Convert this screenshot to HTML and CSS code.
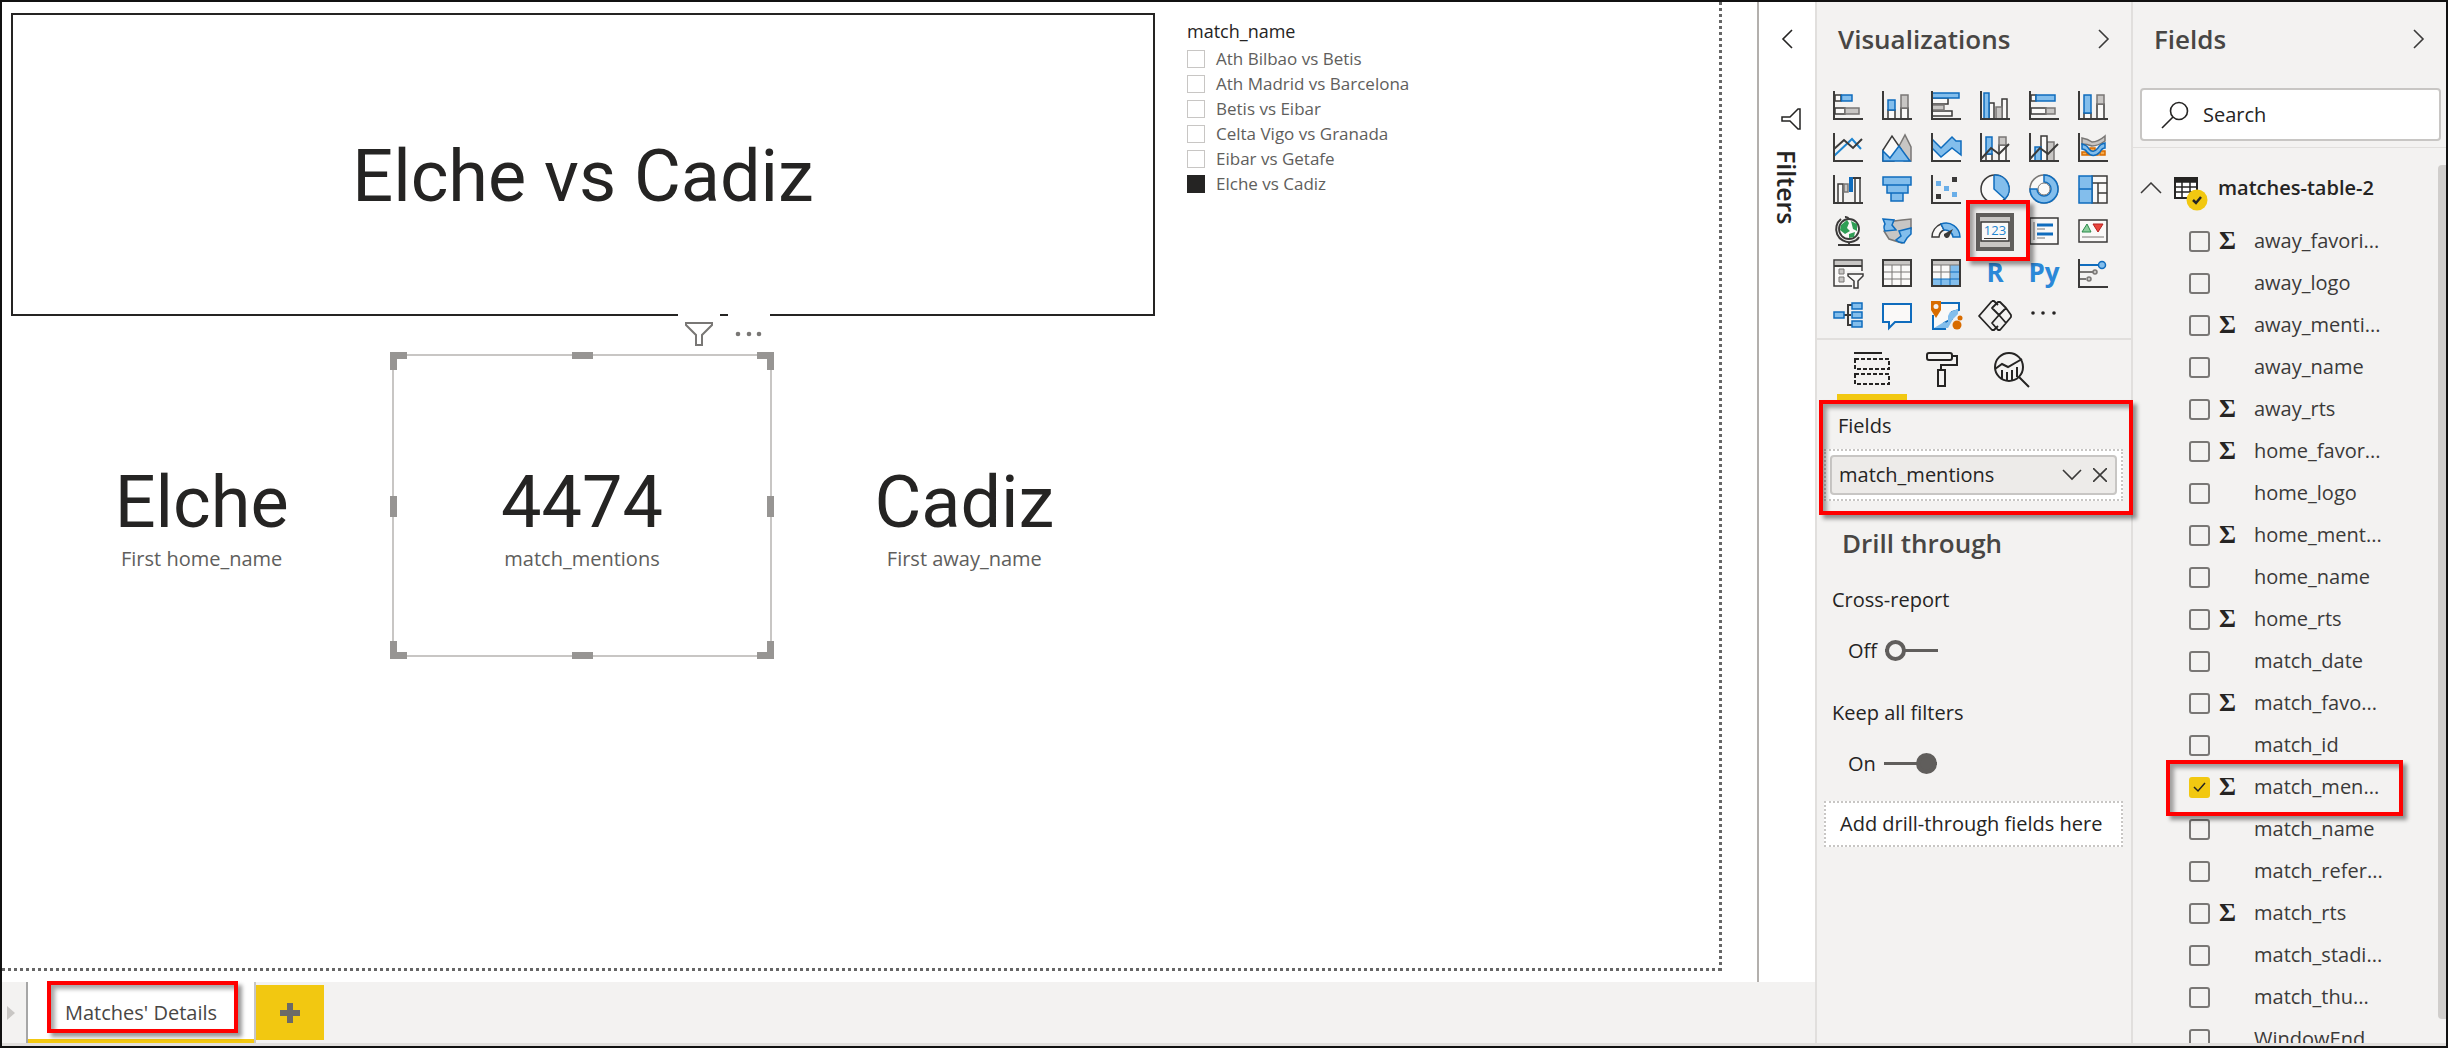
FILE: index.html
```html
<!DOCTYPE html>
<html lang="en">
<head>
<meta charset="utf-8">
<meta name="viewport" content="width=device-width, initial-scale=1">
<title>Matches' Details</title>
<link rel="stylesheet" href="styles.css">
</head>
<body>
<div class="app">
  <main class="workspace">
    <div class="stage">
      <div class="canvas">
        <div class="report">
          <div class="visuals">
            <section class="card title-card"><p class="value">Elche vs Cadiz</p></section>
            <div class="card-row">
              <section class="card"><p class="value">Elche</p><p class="caption">First home_name</p></section>
              <section class="card selected">
                <p class="value">4474</p><p class="caption">match_mentions</p>
                <div class="visual-header">
                  <button class="header-btn" aria-label="Filters on this visual"><svg width="28" height="24" viewBox="0 0 28 24" fill="none" stroke="#797775" stroke-width="2"><path d="M1 1H27V3L17 13V23H11V13L1 3Z"/></svg></button>
                  <button class="header-btn" aria-label="More options"><svg width="28" height="24" viewBox="0 0 28 24" fill="#797775"><circle cx="3" cy="12" r="2.3"/><circle cx="14" cy="12" r="2.3"/><circle cx="24" cy="12" r="2.3"/></svg></button>
                </div>
                <i class="handle corner tl"></i><i class="handle top"></i><i class="handle corner tr"></i>
                <i class="handle left"></i><i class="handle right"></i>
                <i class="handle corner bl"></i><i class="handle bottom"></i><i class="handle corner br"></i>
              </section>
              <section class="card"><p class="value">Cadiz</p><p class="caption">First away_name</p></section>
            </div>
          </div>
          <fieldset class="slicer">
            <legend>match_name</legend>
            <label><input type="checkbox">Ath Bilbao vs Betis</label>
            <label><input type="checkbox">Ath Madrid vs Barcelona</label>
            <label><input type="checkbox">Betis vs Eibar</label>
            <label><input type="checkbox">Celta Vigo vs Granada</label>
            <label><input type="checkbox">Eibar vs Getafe</label>
            <label><input type="checkbox" checked>Elche vs Cadiz</label>
          </fieldset>
        </div>
      </div>
      <aside class="filters">
        <button class="plain" aria-label="Expand filters"><svg width="12" height="20" viewBox="0 0 12 20" fill="none" stroke="#252423" stroke-width="1.6"><path d="M11 1L2 10L11 19"/></svg></button>
        <svg class="filter-icon" width="20" height="22" viewBox="0 0 20 22" fill="none" stroke="#252423" stroke-width="1.5"><path d="M19 1V21H17L9 13H1V9H9L17 1Z"/></svg>
        <h2>Filters</h2>
      </aside>
    </div>
    <nav class="tabs">
      <button class="scroll-tabs" aria-label="Next pages"><svg width="8" height="14" viewBox="0 0 8 14" fill="#c8c6c4"><path d="M0 0L8 7L0 14Z"/></svg></button>
      <div class="tab-wrap marked"><button class="tab">Matches' Details</button></div>
      <button class="add" aria-label="New page"><svg width="20" height="20" viewBox="0 0 20 20" fill="#6b6a67"><path d="M7 0H13V7H20V13H13V20H7V13H0V7H7Z"/></svg></button>
    </nav>
  </main>

  <aside class="pane viz">
    <header class="pane-head"><h2>Visualizations</h2><button class="plain" aria-label="Collapse"><svg width="12" height="20" viewBox="0 0 12 20" fill="none" stroke="#3b3a39" stroke-width="1.6"><path d="M1 1L10 10L1 19"/></svg></button></header>
    <div class="gallery">
      <button aria-label="Stacked bar chart"><svg viewBox="0 0 30 30"><path class="w" d="M2 4H8V10H2ZM2 17H12V23H2Z"/><path class="b" d="M8.500 4H19V10H8.500Z"/><path class="g" d="M12 17H26V23H12Z"/><path class="ax" d="M1 0V28H30"/></svg></button>
      <button aria-label="Stacked column chart"><svg viewBox="0 0 30 30"><path class="w" d="M6 19H13V28H6ZM19 17H26V28H19Z"/><path class="b" d="M6 9H13V19H6Z"/><path class="g" d="M19 4H26V17H19Z"/><path class="ax" d="M1 0V28H30"/></svg></button>
      <button aria-label="Clustered bar chart"><svg viewBox="0 0 30 30"><path class="w" d="M1 7H17V13H1ZM1 20H21V25H1Z"/><path class="g" d="M1 14H13V19H1Z"/><path class="b" d="M1 2H28V7H1Z"/><path class="ax" d="M1 0V28H30"/></svg></button>
      <button aria-label="Clustered column chart"><svg viewBox="0 0 30 30"><path class="w" d="M9 12H14V28H9ZM22 8H27V28H22Z"/><path class="g" d="M16 16H22V28H16Z"/><path class="b" d="M4 2H9V28H4Z"/><path class="ax" d="M1 0V28H30"/></svg></button>
      <button aria-label="100% stacked bar chart"><svg viewBox="0 0 30 30"><path class="w" d="M2 4H7V10H2ZM2 17H17V23H2Z"/><path class="b" d="M7 4H26V10H7Z"/><path class="g" d="M17 17H26V23H17Z"/><path class="ax" d="M1 0V28H30"/></svg></button>
      <button aria-label="100% stacked column chart"><svg viewBox="0 0 30 30"><path class="w" d="M6 22H13V28H6ZM19 13H26V28H19Z"/><path class="b" d="M6 4H13V22H6Z"/><path class="g" d="M19 4H26V13H19Z"/><path class="ax" d="M1 0V28H30"/></svg></button>

      <button aria-label="Line chart"><svg viewBox="0 0 30 30"><path class="bl" d="M1 23L19 6L28 16"/><path class="ln" d="M1 16L11 7L20 15L29 6"/><path class="ax" d="M1 0V28H30"/></svg></button>
      <button aria-label="Area chart"><svg viewBox="0 0 30 30"><path class="g" d="M15 17L23 2L29 14V28H22Z"/><path class="w" d="M1 28V17L10 3L19 16L12 28Z"/><path class="b" d="M1 18L8 25L17 13L28 28H1Z"/></svg></button>
      <button aria-label="Stacked area chart"><svg viewBox="0 0 30 30"><path fill="#faf9f8" d="M1 14L10 24L21 15L30 22V28H1Z"/><path class="b" d="M1 6L10 15L21 4L25 8H30V22L21 15L10 24L1 15Z"/><path class="ax" d="M1 0V28H30"/></svg></button>
      <button aria-label="Line and stacked column chart"><svg viewBox="0 0 30 30"><path class="w" d="M6 21H12V28H6ZM19 12H26V28H19Z"/><path class="b" d="M6 4H12V21H6Z"/><path class="g" d="M19 4H26V12H19Z"/><path class="ln" d="M1 26L11 15L19 21L29 11"/><path class="ax" d="M1 0V28H30"/></svg></button>
      <button aria-label="Line and clustered column chart"><svg viewBox="0 0 30 30"><path class="g" d="M18 9H25V28H18Z"/><path class="w" d="M12 3H18V28H12Z"/><path class="b" d="M6 14H12V28H6Z"/><path class="ln" d="M1 26L11 15L19 21L29 11"/><path class="ax" d="M1 0V28H30"/></svg></button>
      <button aria-label="Ribbon chart"><svg viewBox="0 0 30 30"><path fill="#f7a94b" stroke="#d86c00" stroke-width="1.500" d="M4 19H9V22H4ZM12 15H17V19H12ZM22 18H27V22H22ZM10 20H20V22H10Z"/><path class="g" d="M4 5Q10 6 14 9Q20 9 27 3V8Q20 13 14 13Q9 11 4 11Z"/><path class="b" d="M4 11Q9 12 11 16Q15 21 20 15Q22 11 27 10V15Q24 15 22 19Q15 26 9 19Q7 16 4 16Z"/><path class="ax" d="M1 0V28H30"/></svg></button>

      <button aria-label="Waterfall chart"><svg viewBox="0 0 30 30"><path class="w" d="M5 9H10V28H5ZM22 3H27V28H22Z"/><path class="g" d="M11 9H15V17H11Z"/><path fill="#0f6cbd" d="M16 2H20V17H16Z"/><path class="ln" d="M20 3H28"/><path class="ax" d="M1 0V28H30"/></svg></button>
      <button aria-label="Funnel chart"><svg viewBox="0 0 30 30"><path class="b" d="M1 2H29V10H1ZM5 10H26V18H5ZM9 18H21V26H9Z"/></svg></button>
      <button aria-label="Scatter chart"><svg viewBox="0 0 30 30"><path fill="#3b3a39" d="M21 2H26V7H21ZM5 19H10V24H5Z"/><path fill="#6aaee8" d="M5 6H10V11H5ZM13 11H18V16H13ZM21 17H26V22H21Z"/><path class="ax" d="M1 0V28H30"/></svg></button>
      <button aria-label="Pie chart"><svg viewBox="0 0 30 30"><circle class="w" cx="15" cy="14" r="14"/><path class="b" d="M15 0A14 14 0 0 1 25 24L14 14V1Z"/></svg></button>
      <button aria-label="Donut chart"><svg viewBox="0 0 30 30"><circle cx="15" cy="14" r="14" fill="#faf9f8" stroke="#797775" stroke-width="1.500"/><path class="b" d="M15 0A14 14 0 1 1 1 14H8A7 7 0 1 0 15 7Z"/><circle cx="15" cy="14" r="6" fill="#faf9f8" stroke="#797775"/></svg></button>
      <button aria-label="Treemap"><svg viewBox="0 0 30 30"><path class="w" d="M14 1H29V28H14ZM14 8H29M20 8V28M20 18H29"/><path class="b" d="M1 1H14V28H1ZM1 14H14"/></svg></button>

      <button aria-label="Map"><svg viewBox="0 0 30 30"><path class="ln" d="M8 2A13 13 0 0 0 18 25Q24 24 26 20M12 0A4 4 0 0 1 16 2M16 25V28M5 28H27"/><circle cx="16" cy="12" r="10" fill="#faf9f8" stroke="#3b3a39" stroke-width="1.800"/><path fill="#2f9e55" d="M8 8L14 3L16 6L14 11L17 14L12 17L7 13ZM18 4L24 7L24 14L20 12ZM16 17L22 15L21 20L16 21Z"/></svg></button>
      <button aria-label="Filled map"><svg viewBox="0 0 30 30"><path class="g" d="M12 4L20 3L29 2V12L20 26L7 22L2 14Z"/><path class="b" d="M1 2L12 3L10 8L14 13L3 14Q1 10 3 7Z"/><path class="b" d="M17 14L29 11V17L25 21L22 26L17 25L14 23L19 19Z"/></svg></button>
      <button aria-label="Gauge"><svg viewBox="0 0 30 30"><path class="w" d="M1 20A14 14 0 0 1 10 7L13 13A8 8 0 0 0 8 20Z"/><path class="b" d="M10 7A14 14 0 0 1 29 20H22A8 8 0 0 0 13 13Z"/><path fill="#3b3a39" d="M22 12L18 20A3 3 0 0 1 13 17Z"/></svg></button>
      <button class="chosen marked" aria-label="Card" aria-pressed="true"><svg viewBox="0 0 30 30"><path class="w" d="M1 5H29V24H1Z"/><text x="15" y="18" text-anchor="middle" font-size="13" fill="#1f85d0">123</text><path stroke="#3b3a39" d="M4 21.500H26"/></svg></button>
      <button aria-label="Multi-row card"><svg viewBox="0 0 30 30"><path class="w" d="M1 1H29V27H1Z"/><path d="M5 5V23" stroke="#797775" stroke-width="1"/><path stroke="#0f6cbd" stroke-width="3" d="M8 8H24M8 17H24"/><path stroke="#797775" d="M8 12H16M8 21H16"/></svg></button>
      <button aria-label="KPI"><svg viewBox="0 0 30 30"><path class="w" d="M1 3H29V25H1Z"/><path fill="#8ccf9c" stroke="#2b8a4b" d="M9 7L13 15H4Z"/><path fill="#e8453c" stroke="#b81f1f" d="M15 7H25L20 15Z"/><path stroke="#797775" d="M4 20H26"/></svg></button>

      <button aria-label="Slicer"><svg viewBox="0 0 30 30"><path class="w" d="M1 1H29V27H1Z"/><path fill="#c8c6c4" d="M2 2H28V7H2Z"/><path class="ln" d="M1 7H29"/><path fill="#c8c6c4" stroke="#797775" d="M6 10H11V15H6ZM6 18H11V23H6Z"/><path fill="#f3f2f1" d="M13 12H30V30H19V22Z"/><path class="w" d="M15 15H30V17L25 22V29H21V22L15 17Z"/></svg></button>
      <button aria-label="Table"><svg viewBox="0 0 30 30"><path class="w" d="M1 1H29V27H1Z"/><path fill="#c8c6c4" d="M2 2H28V6H2Z"/><path stroke="#797775" d="M2 6H28M2 13H28M2 20H28M10 6V27M19 6V27" fill="none"/><path class="ax" d="M1 1H29V27H1Z"/></svg></button>
      <button aria-label="Matrix"><svg viewBox="0 0 30 30"><path class="w" d="M1 1H29V27H1Z"/><path fill="#c8c6c4" d="M2 2H28V6H2Z"/><path fill="#83beec" d="M19 6H28V27H2V20H19Z"/><path stroke="#797775" d="M2 6H28M2 13H19M10 6V20M19 6V20" fill="none"/><path stroke="#0f6cbd" d="M2 20H28M19 13H28M10 20V27M19 20V27"/><path class="ax" d="M1 1H29V27H1Z"/></svg></button>
      <button class="script" aria-label="R script visual">R</button>
      <button class="script" aria-label="Python visual">Py</button>
      <button aria-label="Key influencers"><svg viewBox="0 0 30 30"><path stroke="#0f6cbd" stroke-width="2" d="M2 6H20"/><circle class="b" cx="24" cy="6" r="3.500"/><path stroke="#797775" stroke-width="2" d="M2 13H15M2 20H8"/><circle class="g" cx="17" cy="13" r="2"/><circle class="g" cx="11" cy="20" r="2"/><path class="ax" d="M1 0V28H30"/></svg></button>

      <button aria-label="Decomposition tree"><svg viewBox="0 0 30 30"><path class="ln" d="M11 14H18M24 4H15V24H24M15 14H18"/><path class="b" d="M1 11H11V17H1ZM19 2H29V8H19ZM19 11H29V17H19ZM19 20H29V26H19Z"/></svg></button>
      <button aria-label="Q&amp;A"><svg viewBox="0 0 30 30"><path d="M1 3H29V21H13L7 27V21H1Z" fill="#faf9f8" stroke="#0f6cbd" stroke-width="2"/></svg></button>
      <button aria-label="Azure map"><svg viewBox="0 0 30 30"><path d="M2 14V28H14L13 22L21 18L21 11L28 9V2H10" fill="#faf9f8" stroke="#0f6cbd" stroke-width="2"/><path fill="#83beec" d="M3 27L13 21L17 22V15L19 11L27 8V13L22 18L17 27Z"/><path fill="#d86c00" fill-rule="evenodd" d="M0 0H10V9L5 17L0 9ZM5 3A2.500 2.500 0 1 0 5 8A2.500 2.500 0 1 0 5 3Z"/><circle cx="26" cy="24" r="4.500" fill="#d86c00"/><circle cx="29" cy="17" r="2.500" fill="#d86c00"/></svg></button>
      <button aria-label="Power Apps"><svg viewBox="0 0 30 30" fill="none" stroke="#252423" stroke-width="1.800" stroke-linejoin="round"><path d="M12 0H14L18 4M12 0L-1 15L12 29H14L18 25"/><path d="M18 1L12 7L19 14L26 7L20 1ZM26 7L31 14V16L26 22L19 14M19 14L12 22L18 29H20L26 22"/></svg></button>
      <button aria-label="More visuals"><svg viewBox="0 0 30 30" fill="#252423"><circle cx="4" cy="12" r="1.800"/><circle cx="14" cy="12" r="1.800"/><circle cx="25" cy="12" r="1.800"/></svg></button>
    </div>
    <div class="modes">
      <button class="active" aria-label="Fields"><svg viewBox="0 0 36 36" fill="none" stroke="#252423" stroke-width="2"><path d="M0 1H28"/><path d="M1 7H35V17H1ZM1 22H35V32H1Z" stroke-dasharray="4 2"/></svg></button>
      <button aria-label="Format"><svg viewBox="0 0 36 36" fill="none" stroke="#252423" stroke-width="2"><rect x="3" y="1" width="25" height="7" rx="2"/><path d="M28 4H33V13H17V18M14 18H21V34H14Z"/></svg></button>
      <button aria-label="Analytics"><svg viewBox="0 0 36 36" fill="none" stroke="#252423" stroke-width="2"><circle cx="15" cy="15" r="14"/><path d="M1 17L8 12L14 15L28 7M8 18V27M13 20V28M18 18V28M23 15V25M25 25L35 35"/></svg></button>
    </div>
    <section class="wells marked">
      <h3>Fields</h3>
      <div class="drop"><div class="chip"><span>match_mentions</span>
        <button class="plain" aria-label="Field options"><svg width="20" height="12" viewBox="0 0 20 12" fill="none" stroke="#3b3a39" stroke-width="1.600"><path d="M1 1L10 10L19 1"/></svg></button>
        <button class="plain" aria-label="Remove field"><svg width="14" height="14" viewBox="0 0 14 14" fill="none" stroke="#3b3a39" stroke-width="1.600"><path d="M0 0L14 14M14 0L0 14"/></svg></button>
      </div></div>
    </section>
    <section class="drill">
      <h2>Drill through</h2>
      <h3 id="cross">Cross-report</h3>
      <label class="switch">Off<input type="checkbox" role="switch" aria-describedby="cross"></label>
      <h3 id="keep">Keep all filters</h3>
      <label class="switch">On<input type="checkbox" role="switch" aria-describedby="keep" checked></label>
      <div class="drop empty">Add drill-through fields here</div>
    </section>
  </aside>

  <aside class="pane fields">
    <header class="pane-head"><h2>Fields</h2><button class="plain" aria-label="Collapse"><svg width="12" height="20" viewBox="0 0 12 20" fill="none" stroke="#3b3a39" stroke-width="1.600"><path d="M1 1L10 10L1 19"/></svg></button></header>
    <div class="search-row"><label class="search">
      <svg width="28" height="28" viewBox="0 0 28 28" fill="none" stroke="#252423" stroke-width="1.600"><circle cx="18" cy="10" r="8.500"/><path d="M12 16L1 27"/></svg>
      <input type="search" placeholder="Search" aria-label="Search">
    </label></div>
    <div class="tree">
      <div class="table-row">
        <svg width="22" height="12" viewBox="0 0 22 12" fill="none" stroke="#3b3a39" stroke-width="1.500"><path d="M1 11L11 1L21 11"/></svg>
        <span class="table-icon"><svg width="24" height="22" viewBox="0 0 24 22" fill="none" stroke="#252423" stroke-width="1.500"><path fill="#fff" stroke-width="2" d="M1 1H23V21H1Z"/><path fill="#252423" d="M1 1H23V5H1Z"/><path d="M1 10H23M1 15H23M8 5V21M16 5V21"/></svg>
        <svg class="badge" width="22" height="22" viewBox="0 0 22 22"><circle cx="11" cy="11" r="10.500" fill="#f2c811"/><path d="M7 11L10 14L15 8" fill="none" stroke="#252423" stroke-width="2.500"/></svg></span>
        <strong>matches-table-2</strong>
      </div>
      <label><input type="checkbox"><i>Σ</i>away_favori...</label>
      <label><input type="checkbox"><i></i>away_logo</label>
      <label><input type="checkbox"><i>Σ</i>away_menti...</label>
      <label><input type="checkbox"><i></i>away_name</label>
      <label><input type="checkbox"><i>Σ</i>away_rts</label>
      <label><input type="checkbox"><i>Σ</i>home_favor...</label>
      <label><input type="checkbox"><i></i>home_logo</label>
      <label><input type="checkbox"><i>Σ</i>home_ment...</label>
      <label><input type="checkbox"><i></i>home_name</label>
      <label><input type="checkbox"><i>Σ</i>home_rts</label>
      <label><input type="checkbox"><i></i>match_date</label>
      <label><input type="checkbox"><i>Σ</i>match_favo...</label>
      <label><input type="checkbox"><i></i>match_id</label>
      <label class="marked"><input type="checkbox" checked><i>Σ</i>match_men...</label>
      <label><input type="checkbox"><i></i>match_name</label>
      <label><input type="checkbox"><i></i>match_refer...</label>
      <label><input type="checkbox"><i>Σ</i>match_rts</label>
      <label><input type="checkbox"><i></i>match_stadi...</label>
      <label><input type="checkbox"><i></i>match_thu...</label>
      <label><input type="checkbox"><i></i>WindowEnd</label>
      <span class="scrollbar"></span>
    </div>
  </aside>
</div>
</body>
</html>
```
FILE: styles.css
```css
*, *::before, *::after { box-sizing: border-box; }

body {
  margin: 0;
  font: 20px/26px "Segoe UI", "Open Sans", "Noto Sans", sans-serif;
  color: #252423;
}

h2, h3, p { margin: 0; font-weight: 400; font-size: 20px; }
button { font: inherit; color: inherit; border: 0; padding: 0; background: none; }
input { margin: 0; font: inherit; }
svg { display: block; }

.app {
  display: grid;
  grid-template-columns: minmax(0, 1fr) 316px 315px;
  height: 100vh;
  border: 2px solid #111;
  background: #fff;
}

/* Red call-out frames */
.marked { position: relative; }
.marked::after {
  content: "";
  position: absolute;
  z-index: 2;
  border: 4px solid #f00;
  box-shadow: 4px 4px 4px rgba(0, 0, 0, .4), inset 4px 4px 4px rgba(0, 0, 0, .35);
  pointer-events: none;
}

/* Report area */
.workspace { display: flex; flex-direction: column; min-width: 0; border-bottom: 3px solid #e1dfdd; }
.stage { flex: 1; display: flex; min-height: 0; }
.canvas { flex: 1; padding: 0 35px 11px 0; }
.report {
  height: 100%;
  display: flex;
  align-items: flex-start;
  gap: 32px;
  padding: 11px 0 0 9px;
  background:
    repeating-linear-gradient(90deg, #666 0 3px, transparent 3px 6px) left bottom / 100% 3px no-repeat,
    repeating-linear-gradient(180deg, #666 0 3px, transparent 3px 6px) right top / 3px 100% no-repeat;
}
.visuals { flex: 0 0 67%; max-width: 1144px; display: flex; flex-direction: column; gap: 38px; }
.card {
  min-height: 303px;
  display: flex;
  flex-direction: column;
  align-items: center;
  justify-content: center;
  padding-top: 22px;
}
.title-card { border: 2px solid #252423; padding-top: 24px; }
.card-row { display: grid; grid-template-columns: repeat(3, 1fr); }
.value { font: 400 72px/84px "DIN", "Roboto", sans-serif; }
.caption { color: #605e5c; line-height: 28px; }

.selected { position: relative; border: 2px solid #c8c6c4; margin-right: 2px; }
.visual-header { position: absolute; right: 0; top: -42px; display: flex; gap: 8px; }
.header-btn { width: 42px; height: 40px; background: #fff; display: grid; place-items: center; }
.handle { position: absolute; background: #979593; width: 7px; height: 7px; }
.corner { width: 17px; height: 18px; background: none; border: 0 solid #979593; }
.tl { top: -4px; left: -4px; border-width: 7px 0 0 7px; }
.tr { top: -4px; right: -4px; border-width: 7px 7px 0 0; }
.bl { bottom: -4px; left: -4px; border-width: 0 0 7px 7px; }
.br { bottom: -4px; right: -4px; border-width: 0 7px 7px 0; }
.top, .bottom { width: 21px; left: calc(50% - 10px); }
.left, .right { height: 21px; top: calc(50% - 10px); }
.top { top: -4px; }
.bottom { bottom: -4px; }
.left { left: -4px; }
.right { right: -4px; }

.slicer { border: 0; margin: 0; padding: 3px 0 0; font-size: 17px; color: #605e5c; }
.slicer legend { padding: 6px 0 0; color: #252423; font-size: 18px; line-height: 24px; }
.slicer label { display: flex; align-items: center; gap: 11px; height: 25px; }
.slicer input { appearance: none; width: 18px; height: 18px; border: 1px solid #c8c6c4; background: #fff; }
.slicer input:checked { background: #252423; border-color: #252423; }

.filters {
  width: 58px;
  border-left: 2px solid #b3b0ad;
  display: flex;
  flex-direction: column;
  align-items: center;
  padding-top: 27px;
}
.filter-icon { margin: 59px 0 20px 8px; }
.filters h2 { writing-mode: vertical-rl; font-weight: 600; font-size: 25px; line-height: 32px; }

.tabs { display: flex; height: 61px; background: #f3f2f1; }
.scroll-tabs { width: 26px; padding: 0 0 0 5px; border-right: 2px solid #a6a6a6; }
.tab-wrap { display: flex; border-right: 2px solid #c8c6c4; }
.tab-wrap::after { inset: -1px 16px 10px 19px; }
.tab { width: 226px; background: #fff; border-bottom: 4px solid #f2c811; color: #484644; padding-top: 4px; }
.add { width: 68px; height: 55px; margin-top: 3px; background: #f2c811; display: grid; place-items: center; }

/* Side panes */
.pane { background: #f3f2f1; border-left: 2px solid #e1dfdd; border-bottom: 3px solid #e1dfdd; min-height: 0; display: flex; flex-direction: column; }
.pane-head { display: flex; justify-content: space-between; align-items: center; height: 74px; padding: 0 21px; flex: none; }
.pane h2 { font-size: 26px; line-height: 36px; font-weight: 600; color: #484644; }

.gallery { display: grid; grid-template-columns: repeat(6, 30px); gap: 12px 19px; padding: 15px 0 7px 16px; border-bottom: 2px solid #e1dfdd; }
.gallery button { width: 30px; height: 30px; }
.gallery svg { width: 30px; height: 30px; overflow: visible; }
.w { fill: #faf9f8; stroke: #3b3a39; stroke-width: 1.5; }
.g { fill: #c8c6c4; stroke: #797775; stroke-width: 1.5; }
.b { fill: #83beec; stroke: #0f6cbd; stroke-width: 1.5; }
.ax, .ln { fill: none; stroke: #3b3a39; stroke-width: 2; }
.bl:is(path) { fill: none; stroke: #1f85d0; stroke-width: 2; }
.chosen { background: #c8c6c4; outline: 4px solid #605e5c; }
.chosen::after { inset: -17px -20px -14px -14px; }
.gallery .script { font-size: 26px; font-weight: 700; line-height: 26px; color: #2b88d8; display: flex; align-items: flex-start; justify-content: center; }

.modes { display: flex; padding: 12px 0 0 20px; height: 60px; }
.modes button { width: 70px; height: 48px; display: flex; justify-content: center; }
.modes svg { width: 36px; height: 36px; }
.modes .active { background: linear-gradient(#f2c811, #f2c811) bottom / 100% 6px no-repeat; }

.wells { padding: 13px 8px 14px 7px; }
.wells::after { inset: 0 -2px 0 2px; }
.wells h3 { padding: 0 0 10px 14px; line-height: 26px; }
.drop { background: #fff; border: 2px dotted #c8c6c4; padding: 4px; }
.chip { display: flex; align-items: center; gap: 11px; height: 40px; padding: 0 8px 0 7px; border: 2px solid #c8c6c4; border-radius: 4px; background: #edebe9; }
.chip span { flex: 1; }

.drill { padding: 10px 8px 0 7px; }
.drill h2 { padding-left: 18px; margin-bottom: 26px; }
.drill h3 { padding-left: 8px; line-height: 26px; }
.switch { display: flex; align-items: center; gap: 8px; height: 27px; margin: 24px 0 36px 24px; }
.switch input { appearance: none; width: 53px; height: 21px; background: linear-gradient(#605e5c, #605e5c) center / 100% 3px no-repeat; }
.switch input::before { content: ""; display: block; width: 21px; height: 21px; border: 4px solid #605e5c; border-radius: 50%; background: #f3f2f1; }
.switch input:checked::before { margin-left: auto; background: #605e5c; }
.drill .switch:last-of-type { margin-bottom: 24px; }
.empty { height: 46px; padding: 0 14px; line-height: 42px; white-space: nowrap; }

.search-row { padding: 12px 5px 6px 7px; border-bottom: 1px solid #e1dfdd; }
.search { display: flex; align-items: center; gap: 14px; height: 53px; padding: 0 19px; background: #fff; border: 2px solid #c8c6c4; border-radius: 4px; }
.search svg { flex: none; }
.search input { width: 100%; border: 0; outline: 0; padding: 0; background: none; }
.search input::placeholder { color: #252423; opacity: 1; }

.tree { position: relative; flex: 1; min-height: 0; overflow: hidden; padding-top: 19px; color: #3b3a39; }
.table-row { display: flex; align-items: center; gap: 12px; height: 42px; padding-left: 7px; margin-bottom: 11px; }
.table-row strong { font-weight: 600; color: #252423; margin-left: 8px; }
.table-icon { position: relative; }
.badge { position: absolute; left: 12px; top: 12px; }
.tree label { display: flex; align-items: center; height: 42px; padding-left: 56px; }
.tree input { appearance: none; width: 21px; height: 21px; border: 2px solid #797775; border-radius: 3px; }
.tree input:checked { border-color: #f2c811; background: #f2c811 url("data:image/svg+xml,%3Csvg xmlns='http://www.w3.org/2000/svg' viewBox='0 0 17 17'%3E%3Cpath d='M3 8L7 12L14 4' fill='none' stroke='%23252423' stroke-width='1.500'/%3E%3C/svg%3E"); }
.tree i { width: 44px; padding-left: 9px; font: 700 26px/26px "Liberation Serif", serif; color: #252423; }
.tree .marked::after { inset: -6px 43px -8px 33px; }
.scrollbar { position: absolute; right: 0; top: 17px; bottom: 24px; width: 8px; border-radius: 4px 0 0 4px; background: #d0cecc; }
```
